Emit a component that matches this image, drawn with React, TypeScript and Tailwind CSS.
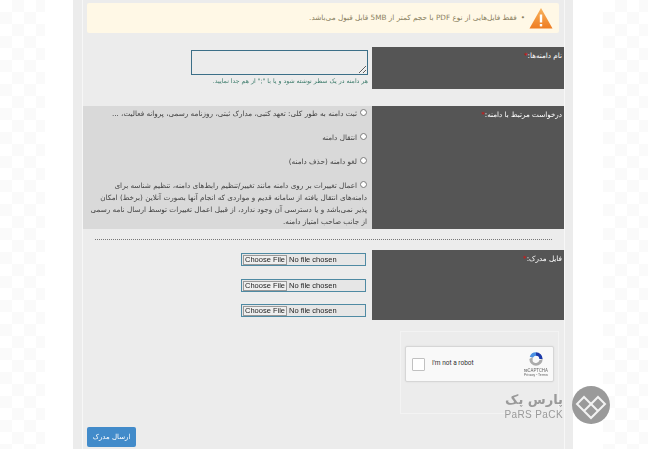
import React from "react";

const FONT = "font-['DejaVu_Sans','Noto_Sans',sans-serif]";

const REQUESTS = [
  {
    text: "ثبت دامنه به طور کلی: تعهد کتبی، مدارک ثبتی، روزنامه رسمی، پروانه فعالیت، ...",
    className: "h-[24px]",
  },
  { text: "انتقال دامنه", className: "h-[24px]" },
  { text: "لغو دامنه (حذف دامنه)", className: "h-[24px]" },
  {
    text: "اعمال تغییرات بر روی دامنه مانند تغییر/تنظیم رابط‌های دامنه، تنظیم شناسه برای دامنه‌های انتقال یافته از سامانه قدیم و مواردی که انجام آنها بصورت آنلاین (برخط) امکان پذیر نمی‌باشد و یا دسترسی آن وجود ندارد، از قبیل اعمال تغییرات توسط ارسال نامه رسمی از جانب صاحب امتیاز دامنه.",
    className: "",
  },
];

function Label({ text }: { text: string }) {
  return (
    <div className="w-[192px] shrink-0 bg-[#555555] pt-[3px] pr-[2px] text-[7.2px] leading-[12px] text-white">
      {text}
      <span className="text-[#e01010]">*</span>
    </div>
  );
}

function FileRow() {
  return (
    <input
      type="file"
      className="block h-[13px] w-[125px] border border-[#4f8aa3] bg-[#e6e6e6] p-px text-[7.5px] leading-[9px] text-[#222] font-['Liberation_Sans',sans-serif] file:mr-[2px] file:h-[10px] file:border file:border-[#999] file:bg-[#efefef] file:px-[1px] file:py-0 file:text-[7.5px] file:leading-[8px] file:text-[#222]"
      dir="ltr"
    />
  );
}

function LogoMark() {
  return (
    <svg viewBox="0 0 38 38" className="h-[38px] w-[38px] shrink-0">
      <circle cx="19" cy="19" r="19" fill="#9a9a9a" />
      <path
        d="M19 18 L12 11 L5 18 L19 32 L33 18 L26 11 Z M12 25 L19 18 L26 25"
        fill="none"
        stroke="#f2f2f2"
        strokeWidth="2"
      />
    </svg>
  );
}

function RecaptchaMark() {
  return (
    <svg viewBox="0 0 24 24" className="h-[16px] w-[16px]">
      <path d="M12 2 A10 10 0 0 1 22 12 L17 12 A5 5 0 0 0 12 7 Z" fill="#1c3aa9" />
      <path d="M12 2 A10 10 0 0 0 2.6 8.5 L7.4 10.2 A5 5 0 0 1 12 7 Z" fill="#4a90e2" />
      <path d="M2 12 A10 10 0 0 0 22 12 L17 14 A5 5 0 0 1 7 12 L7 9 Z" fill="#ababab" />
    </svg>
  );
}

export default function App() {
  return (
    <div
      className={`relative flex h-[449px] w-[648px] overflow-hidden bg-white ${FONT}`}
    >
      <div className="w-[45px] shrink-0 bg-[conic-gradient(#fafafa_25%,#ffffff_0_50%,#fafafa_0_75%,#ffffff_0)] bg-[length:24px_24px]" />
      <div className="w-[28px] shrink-0" />

      <main className="w-[500px] shrink-0 bg-[#ececec] pr-[8px] pl-[9px]">
        <div className="h-full border-x border-[#f7f7f7] pt-[3px]">
          <div
            dir="rtl"
            className="mr-[5px] ml-[4px] flex h-[30px] items-center gap-[4px] rounded-[2px] bg-[#fff8e6] pr-[6px] text-[7.3px] text-[#8a8060]"
          >
            <svg viewBox="0 0 24 22" className="h-[22px] w-[24px] shrink-0">
              <defs>
                <linearGradient id="warn" x1="0" y1="0" x2="0" y2="1">
                  <stop offset="0" stopColor="#f8b35c" />
                  <stop offset="1" stopColor="#ee7c22" />
                </linearGradient>
              </defs>
              <path d="M12 1 L23.5 21.5 L0.5 21.5 Z" fill="url(#warn)" />
              <rect x="10.8" y="7.5" width="2.4" height="8" fill="#fff" />
              <rect x="10.8" y="17" width="2.4" height="2.4" fill="#fff" />
            </svg>
            <span>•</span>
            <span>فقط فایل‌هایی از نوع PDF با حجم کمتر از 5MB قابل قبول می‌باشد.</span>
          </div>

          <div dir="rtl" className="mt-[14px] flex h-[42px]">
            <Label text="نام دامنه‌ها:" />
            <div className="pt-[3px] pr-[4px]">
              <textarea
                dir="ltr"
                className="block h-[25px] w-[177px] border border-[#3c6f88] bg-[#ececec]"
              />
              <p className="mt-[1px] text-[6.2px] leading-[10px] text-[#3b7a6a]">
                هر دامنه در یک سطر نوشته شود و یا با ";" از هم جدا نمایید.
              </p>
            </div>
          </div>

          <div dir="rtl" className="mt-[17px] flex h-[123px]">
            <Label text="درخواست مرتبط با دامنه:" />
            <div className="flex-1 bg-[#d9d9d9] pt-[2px] pr-[5px] pl-[5px] text-[7.25px] leading-[12px] text-[#444]">
              {REQUESTS.map((item) => (
                <div key={item.text} className={item.className}>
                  <input
                    type="radio"
                    name="request"
                    className="ml-[3px] inline-block h-[7px] w-[7px] align-[0px]"
                  />
                  {item.text}
                </div>
              ))}
            </div>
          </div>

          <div className="mx-[12px] mt-[10px] mb-[10px] h-px border-t border-dotted border-[#777]" />

          <div dir="rtl" className="flex h-[70px]">
            <Label text="فایل مدرک:" />
            <div className="flex flex-col gap-[12.5px] pt-[3px] pr-[6px]">
              <FileRow />
              <FileRow />
              <FileRow />
            </div>
          </div>

          <div className="mt-[11px] mr-[5px] ml-auto h-[83px] w-[159px] border border-[#f3f3f3] pt-[14px] pl-[4px]">
            <div className="flex h-[36px] w-[149px] items-center justify-between rounded-[2px] border border-[#d6d6d6] bg-[#f9f9f9] pr-[5px] pl-[6px] font-['Roboto',sans-serif] shadow-[0_0_2px_rgba(0,0,0,0.08)]">
              <div className="flex items-center gap-[7px]">
                <div className="h-[13px] w-[13px] rounded-[1px] border border-[#c1c1c1] bg-white" />
                <span className="text-[6.5px] text-[#333]">I'm not a robot</span>
              </div>
              <div className="flex flex-col items-center">
                <RecaptchaMark />
                <span className="mt-[1px] text-[4.5px] leading-[5px] text-[#666]">reCAPTCHA</span>
                <span className="text-[3.5px] leading-[5px] text-[#666]">Privacy - Terms</span>
              </div>
            </div>
          </div>

          <button className="mt-[13px] ml-[4px] block h-[20px] w-[49px] rounded-[2px] bg-[#428bca] text-center text-[7px] text-white">
            ارسال مدرک
          </button>
        </div>
      </main>

      <div className="w-[30px] shrink-0" />
      <div className="flex-1 bg-[conic-gradient(#fafafa_25%,#ffffff_0_50%,#fafafa_0_75%,#ffffff_0)] bg-[length:24px_24px]" />

      <div className="absolute top-[386px] left-[505px] flex items-center gap-[9px]">
        <div className="flex w-[58px] flex-col items-end text-[#9a9a9a]">
          <span dir="rtl" className="text-[13px] leading-[19px] font-bold whitespace-nowrap">پارس پک</span>
          <span className="text-[10px] leading-[12px] tracking-[0.4px] font-['Liberation_Sans',sans-serif] whitespace-nowrap">PaRS PaCK</span>
        </div>
        <LogoMark />
      </div>
    </div>
  );
}
